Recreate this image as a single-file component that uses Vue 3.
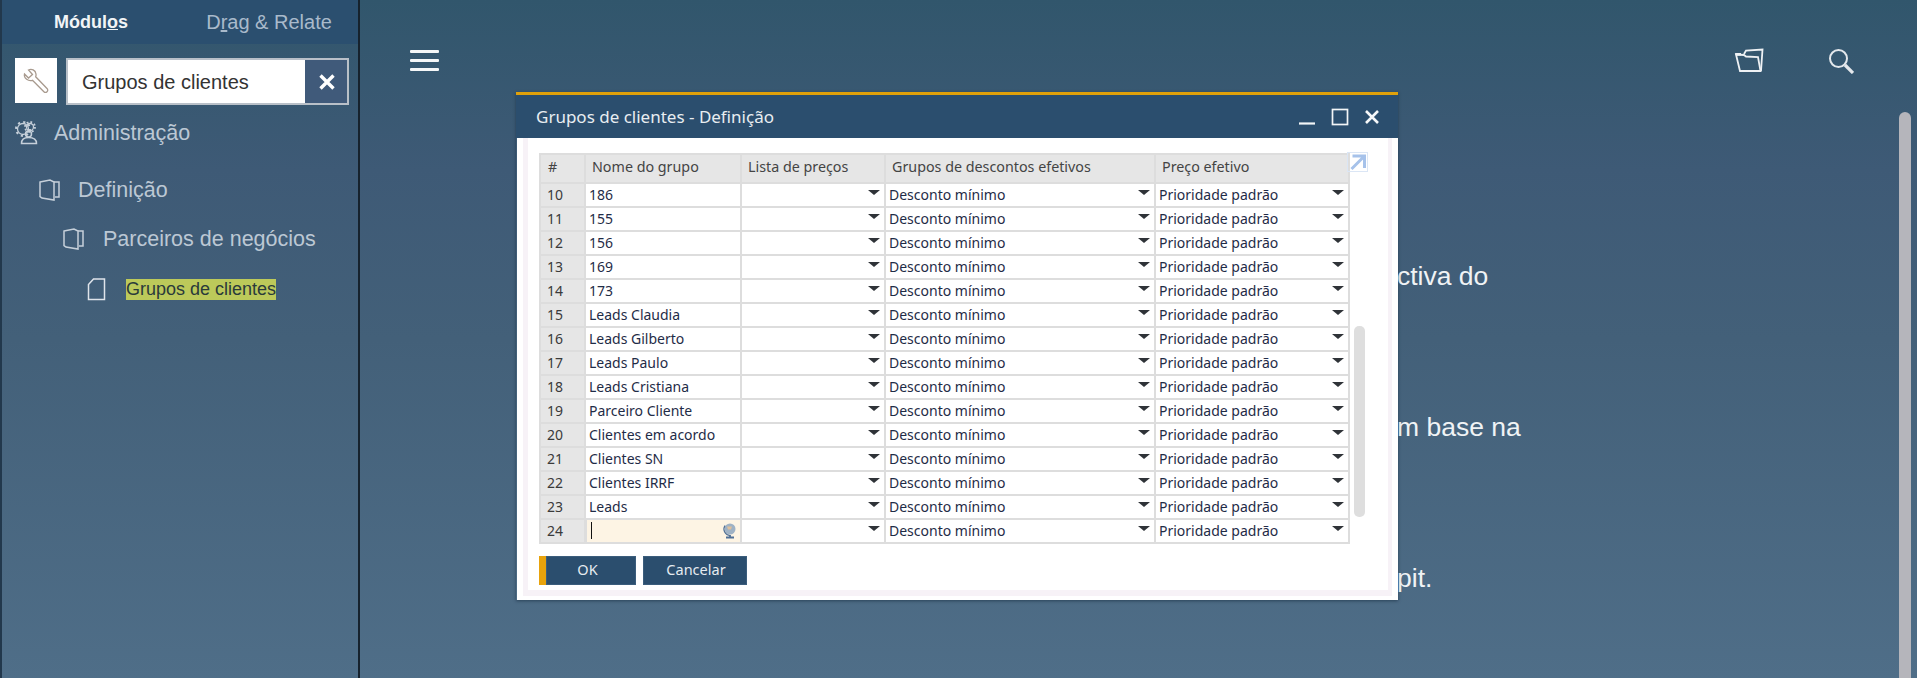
<script setup>
import { ref } from "vue";

const rows = ref([
  { id: 10, name: "186" },
  { id: 11, name: "155" },
  { id: 12, name: "156" },
  { id: 13, name: "169" },
  { id: 14, name: "173" },
  { id: 15, name: "Leads Claudia" },
  { id: 16, name: "Leads Gilberto" },
  { id: 17, name: "Leads Paulo" },
  { id: 18, name: "Leads Cristiana" },
  { id: 19, name: "Parceiro Cliente" },
  { id: 20, name: "Clientes em acordo" },
  { id: 21, name: "Clientes SN" },
  { id: 22, name: "Clientes IRRF" },
  { id: 23, name: "Leads" },
  { id: 24, name: "", active: true },
]);
</script>

<template>
  <div class="page">
    <aside class="sidebar">
      <div class="tabs">
        <div class="tab active">Módul<u>o</u>s</div>
        <div class="tab">D<u>r</u>ag &amp; Relate</div>
      </div>

      <div class="search">
        <div class="wrench">
          <svg width="26" height="26" viewBox="0 0 26 26" fill="none" stroke="#a89a8e" stroke-width="1.300">
            <path d="M1.500 6 5.500 10 9.500 6.500 5.500 2C8.500.5 12.500 2 13 6c.2 1.200 0 2-.3 2.800L24 20.500c1 1 1 2.300 0 3.200-.9.900-2.200.9-3.100 0L9.500 12.300C5.500 13.500.5 10.500 1.500 6Z" />
          </svg>
        </div>
        <div class="search-box">
          <span class="search-text">Grupos de clientes</span>
          <button class="clear">
            <svg width="18" height="18" viewBox="0 0 18 18" stroke="#fff" stroke-width="3.400">
              <path d="M2.500 2.500 15.500 15.500M15.500 2.500 2.500 15.500" />
            </svg>
          </button>
        </div>
      </div>

      <div class="tree">
        <div class="node level-0">
          <svg class="node-icon" width="24" height="24" viewBox="0 0 24 24" fill="none" stroke="#c6d0da">
            <circle cx="8" cy="8" r="5.500" stroke-width="1.300" />
            <circle cx="8" cy="8" r="7" stroke-width="2" stroke-dasharray="2.200 3.300" />
            <circle cx="15" cy="6" r="3.500" stroke-width="1.300" />
            <circle cx="15" cy="6" r="5" stroke-width="1.800" stroke-dasharray="1.800 2.100" />
            <circle cx="13.500" cy="13" r="3" stroke-width="1.500" />
            <path d="M6.500 22.500c0-4 2.500-6 7-6s8 2 8 6Z" stroke-width="1.500" />
          </svg>
          <span>Administração</span>
        </div>
        <div class="node level-1">
          <svg class="node-icon" width="21" height="22" viewBox="0 0 21 22" fill="none" stroke="#c6d0da" stroke-width="1.500">
            <path d="M1 3 11 1 15 3V21L3 19 1 17.500Z" />
            <path d="M15 3H20V18H16" />
          </svg>
          <span>Definição</span>
        </div>
        <div class="node level-2">
          <svg class="node-icon" width="21" height="22" viewBox="0 0 21 22" fill="none" stroke="#c6d0da" stroke-width="1.500">
            <path d="M1 3 11 1 15 3V21L3 19 1 17.500Z" />
            <path d="M15 3H20V18H16" />
          </svg>
          <span>Parceiros de negócios</span>
        </div>
        <div class="node level-3">
          <svg class="node-icon" width="19" height="23" viewBox="0 0 19 23" fill="none" stroke="#dfe4ea" stroke-width="1.500">
            <path d="M6.500 1H17.500V21.500H1.500V6.500Z" />
          </svg>
          <mark class="hit">Grupos de clientes</mark>
        </div>
      </div>
    </aside>

    <main class="main">
      <header class="topbar">
        <button class="burger"><span></span><span></span><span></span></button>
        <div class="top-actions">
          <svg width="30" height="25" viewBox="0 0 30 25" fill="none" stroke="#eef1f4" stroke-width="1.800">
            <path d="M2 6.500 10 7 12 8.500 24 9 26.500 23H6Z" />
            <path d="M10 6 12 2.500 28.500 1.500 27 23" />
            <path d="M1 5h6v2.500H2Z" fill="#eef1f4" stroke="none" />
          </svg>
          <svg width="26" height="26" viewBox="0 0 26 26" fill="none" stroke="#e4e8ec">
            <circle cx="10.500" cy="10.500" r="8.500" stroke-width="2" />
            <path d="M17 17 25 25" stroke-width="3.200" />
          </svg>
        </div>
      </header>
      <div class="intro">
        <p class="line-1">ctiva do</p>
        <p class="line-2">m base na</p>
        <p class="line-3">pit.</p>
      </div>
      <div class="page-scroll"></div>
    </main>

    <section class="dialog">
      <div class="dialog-title">
        <span>Grupos de clientes - Definição</span>
        <div class="window-btns">
          <svg width="18" height="18" viewBox="0 0 18 18" fill="none" stroke="#f2f5f7" stroke-width="2.200">
            <path d="M1 15.500H17" />
          </svg>
          <svg width="18" height="18" viewBox="0 0 18 18" fill="none" stroke="#f2f5f7" stroke-width="1.700">
            <rect x="1.500" y="1.500" width="15" height="15" />
          </svg>
          <svg width="16" height="16" viewBox="0 0 16 16" fill="none" stroke="#f6f8f9" stroke-width="2.600">
            <path d="M2 2 14 14M14 2 2 14" />
          </svg>
        </div>
      </div>

      <div class="dialog-frame">
        <div class="dialog-body">
          <div class="grid-wrap">
            <table class="grid">
              <colgroup>
                <col class="c-num" />
                <col class="c-name" />
                <col class="c-list" />
                <col class="c-disc" />
                <col class="c-price" />
              </colgroup>
              <thead>
                <tr>
                  <th class="num-head">#</th>
                  <th>Nome do grupo</th>
                  <th>Lista de preços</th>
                  <th>Grupos de descontos efetivos</th>
                  <th>Preço efetivo</th>
                </tr>
              </thead>
              <tbody>
                <tr v-for="row in rows" :key="row.id">
                  <td class="num">{{ row.id }}</td>
                  <td v-if="row.active" class="editing">
                    <span class="caret"></span>
                    <svg class="globe" width="15" height="17" viewBox="0 0 15 17">
                      <circle cx="8" cy="7" r="5.500" fill="#9fb2c5" />
                      <path d="M5 4.500h5l-1 3H6Z" fill="#dfc09c" />
                      <path d="M3 3.500A6.500 6.500 0 0 0 8 13.500" fill="none" stroke="#4f6f96" stroke-width="1.200" />
                      <path d="M4 15.500h8M8 13v2.500" stroke="#4f6f96" stroke-width="1.800" />
                    </svg>
                  </td>
                  <td v-else>{{ row.name }}</td>
                  <td class="select"></td>
                  <td class="select">Desconto mínimo</td>
                  <td class="select">Prioridade padrão</td>
                </tr>
              </tbody>
            </table>

            <div class="expand">
              <svg width="19" height="18" viewBox="0 0 18 18" fill="none" stroke="#a6c2ea" stroke-width="3">
                <path d="M3 16 15 4M4 3h12v12" />
              </svg>
            </div>
            <div class="grid-scroll"></div>
          </div>

          <div class="actions">
            <button class="btn primary">OK</button>
            <button class="btn">Cancelar</button>
          </div>
        </div>
      </div>
    </section>
  </div>
</template>

<style>
html,
body {
  margin: 0;
  overflow: hidden;
}
</style>

<style scoped>
.page {
  position: relative;
  display: flex;
  height: 678px;
  overflow: hidden;
  font-family: "Liberation Sans", Arial, sans-serif;
  background: linear-gradient(180deg, #31566c 0%, #3e5a76 25%, #436079 50%, #4f6e88 100%);
}

button {
  padding: 0;
  border: none;
  background: none;
}

.sidebar {
  width: 360px;
  flex-shrink: 0;
  box-sizing: border-box;
  border-left: 2px solid #22384c;
  border-right: 2px solid #16222d;
}

.tabs {
  display: flex;
  height: 44px;
  background: #2b4f6f;
}

.tab {
  flex: 1;
  text-align: center;
  line-height: 44px;
  font-size: 20px;
  color: #a9bacb;
}

.tab.active {
  font-weight: bold;
  font-size: 18px;
  color: #f1f4f6;
}

.search {
  display: flex;
  gap: 9px;
  padding: 14px 9px 0 13px;
}

.wrench {
  display: flex;
  align-items: center;
  justify-content: center;
  width: 42px;
  height: 45px;
  background: #fff;
}

.search-box {
  flex: 1;
  display: flex;
  height: 47px;
  box-sizing: border-box;
  border: 2px solid #b9c0c8;
  background: #fff;
}

.search-text {
  flex: 1;
  padding-left: 14px;
  line-height: 45px;
  font-size: 20px;
  color: #333;
}

.clear {
  display: flex;
  align-items: center;
  justify-content: center;
  width: 42px;
  padding-left: 1px;
  background: #405a7a;
}

.tree {
  padding-top: 14px;
  color: #bcc8d4;
}

.node {
  display: flex;
  align-items: center;
  font-size: 21.500px;
}

.node-icon {
  flex-shrink: 0;
}

.level-0 {
  height: 28px;
  padding-left: 13px;
  gap: 15px;
}

.level-1 {
  height: 28px;
  margin-top: 29px;
  padding-left: 37px;
  gap: 18px;
}

.level-2 {
  height: 28px;
  margin-top: 21px;
  padding-left: 61px;
  gap: 19px;
}

.level-3 {
  height: 28px;
  margin-top: 22px;
  padding-left: 85px;
  gap: 20px;
}

.hit {
  padding: 2px 0;
  font-size: 18px;
  line-height: 17px;
  color: #2a3a3a;
  background: #bcc95a;
}

.main {
  position: relative;
  flex: 1;
  min-width: 0;
}

.topbar {
  display: flex;
  align-items: flex-start;
  justify-content: space-between;
  padding: 49px 63px 0 50px;
}

.burger {
  display: flex;
  flex-direction: column;
  gap: 6px;
  width: 29px;
  margin-top: 1px;
}

.burger span {
  height: 3px;
  border-radius: 1px;
  background: #f5f7f8;
}

.top-actions {
  display: flex;
  gap: 64px;
  margin-top: -1px;
}

.intro {
  padding-left: 1037px;
  font-size: 26.500px;
  color: #f0f3f5;
}

.intro p {
  margin: 0;
  line-height: 30px;
}

.line-1 {
  padding-top: 187px;
}

.line-2 {
  padding-top: 121px;
}

.line-3 {
  padding-top: 121px;
}

.page-scroll {
  position: absolute;
  top: 112px;
  right: 6px;
  bottom: 0;
  width: 12px;
  border-radius: 6px 6px 0 0;
  background: #b5b5bb;
}

.dialog {
  position: absolute;
  left: 516px;
  top: 92px;
  width: 882px;
  border-top: 3px solid #e0a10b;
  box-shadow: 0 1px 3px rgba(20, 40, 60, 0.6);
  font-family: "Noto Sans", Tahoma, sans-serif;
}

.dialog-title {
  display: flex;
  align-items: center;
  justify-content: space-between;
  height: 43px;
  padding: 0 18px 0 20px;
  font-size: 17px;
  color: #e8edf1;
  background: #2b4e6e;
}

.window-btns {
  display: flex;
  align-items: center;
  gap: 15px;
}

.dialog-frame {
  box-sizing: border-box;
  height: 462px;
  margin-left: 1px;
  border-style: solid;
  border-color: #fff;
  border-width: 0 6px 4px 6px;
  background: #fff;
}

.dialog-body {
  box-sizing: border-box;
  height: 100%;
  padding: 15px 0 0 11px;
  background: #fff;
  border-style: solid;
  border-color: #f7f2f7;
  border-width: 0 4px 6px 5px;
}

.grid-wrap {
  position: relative;
}

.grid {
  width: 809px;
  table-layout: fixed;
  border-collapse: collapse;
  font-size: 14px;
  color: #1f2c47;
}

.c-num {
  width: 45px;
}

.c-name {
  width: 156px;
}

.c-list {
  width: 144px;
}

.c-disc {
  width: 270px;
}

.c-price {
  width: 194px;
}

th,
td {
  box-sizing: border-box;
  border: 2px solid #dddddd;
  padding: 0 3px;
  overflow: hidden;
  white-space: nowrap;
  font-weight: normal;
  text-align: left;
}

th {
  height: 29px;
  padding: 0 6px 5px;
  font-size: 14.300px;
  color: #444;
  background: #e6e6e6;
}

.num-head {
  padding-left: 7px;
}

td {
  height: 24px;
  line-height: 20px;
}

.num {
  padding-left: 6px;
  background: #e6e6e6;
  color: #3a3a3a;
}

.select {
  position: relative;
}

.select::after {
  content: "";
  position: absolute;
  top: 6px;
  right: 4px;
  border-style: solid;
  border-width: 5px 6px 0;
  border-color: #2f3338 transparent transparent;
}

.editing {
  position: relative;
  background: #fdf4e4;
  border-left: 3px solid #dddddd;
}

.caret {
  position: absolute;
  top: 2px;
  left: 4px;
  width: 1px;
  height: 17px;
  background: #111;
}

.globe {
  position: absolute;
  top: 2px;
  right: 3px;
}

.expand {
  position: absolute;
  top: -1px;
  left: 808px;
  display: flex;
  align-items: center;
  justify-content: center;
  width: 21px;
  height: 20px;
  box-sizing: border-box;
  border: 1px solid #dbe6f5;
}

.grid-scroll {
  position: absolute;
  top: 173px;
  left: 815px;
  width: 11px;
  height: 191px;
  border-radius: 5px;
  background: #dedede;
}

.actions {
  display: flex;
  gap: 7px;
  margin-top: 12px;
}

.btn {
  width: 104px;
  height: 29px;
  padding: 0 0 3px 2px;
  box-sizing: border-box;
  font-family: "Noto Sans", Tahoma, sans-serif;
  font-size: 14.500px;
  color: #e6ebf0;
  background: #2b4e6e;
  box-shadow: inset 0 0 0 1px #3b5d7c;
}

.btn.primary {
  width: 97px;
  padding: 0 7px 3px 0;
  border-left: 7px solid #e8a30c;
}
</style>
